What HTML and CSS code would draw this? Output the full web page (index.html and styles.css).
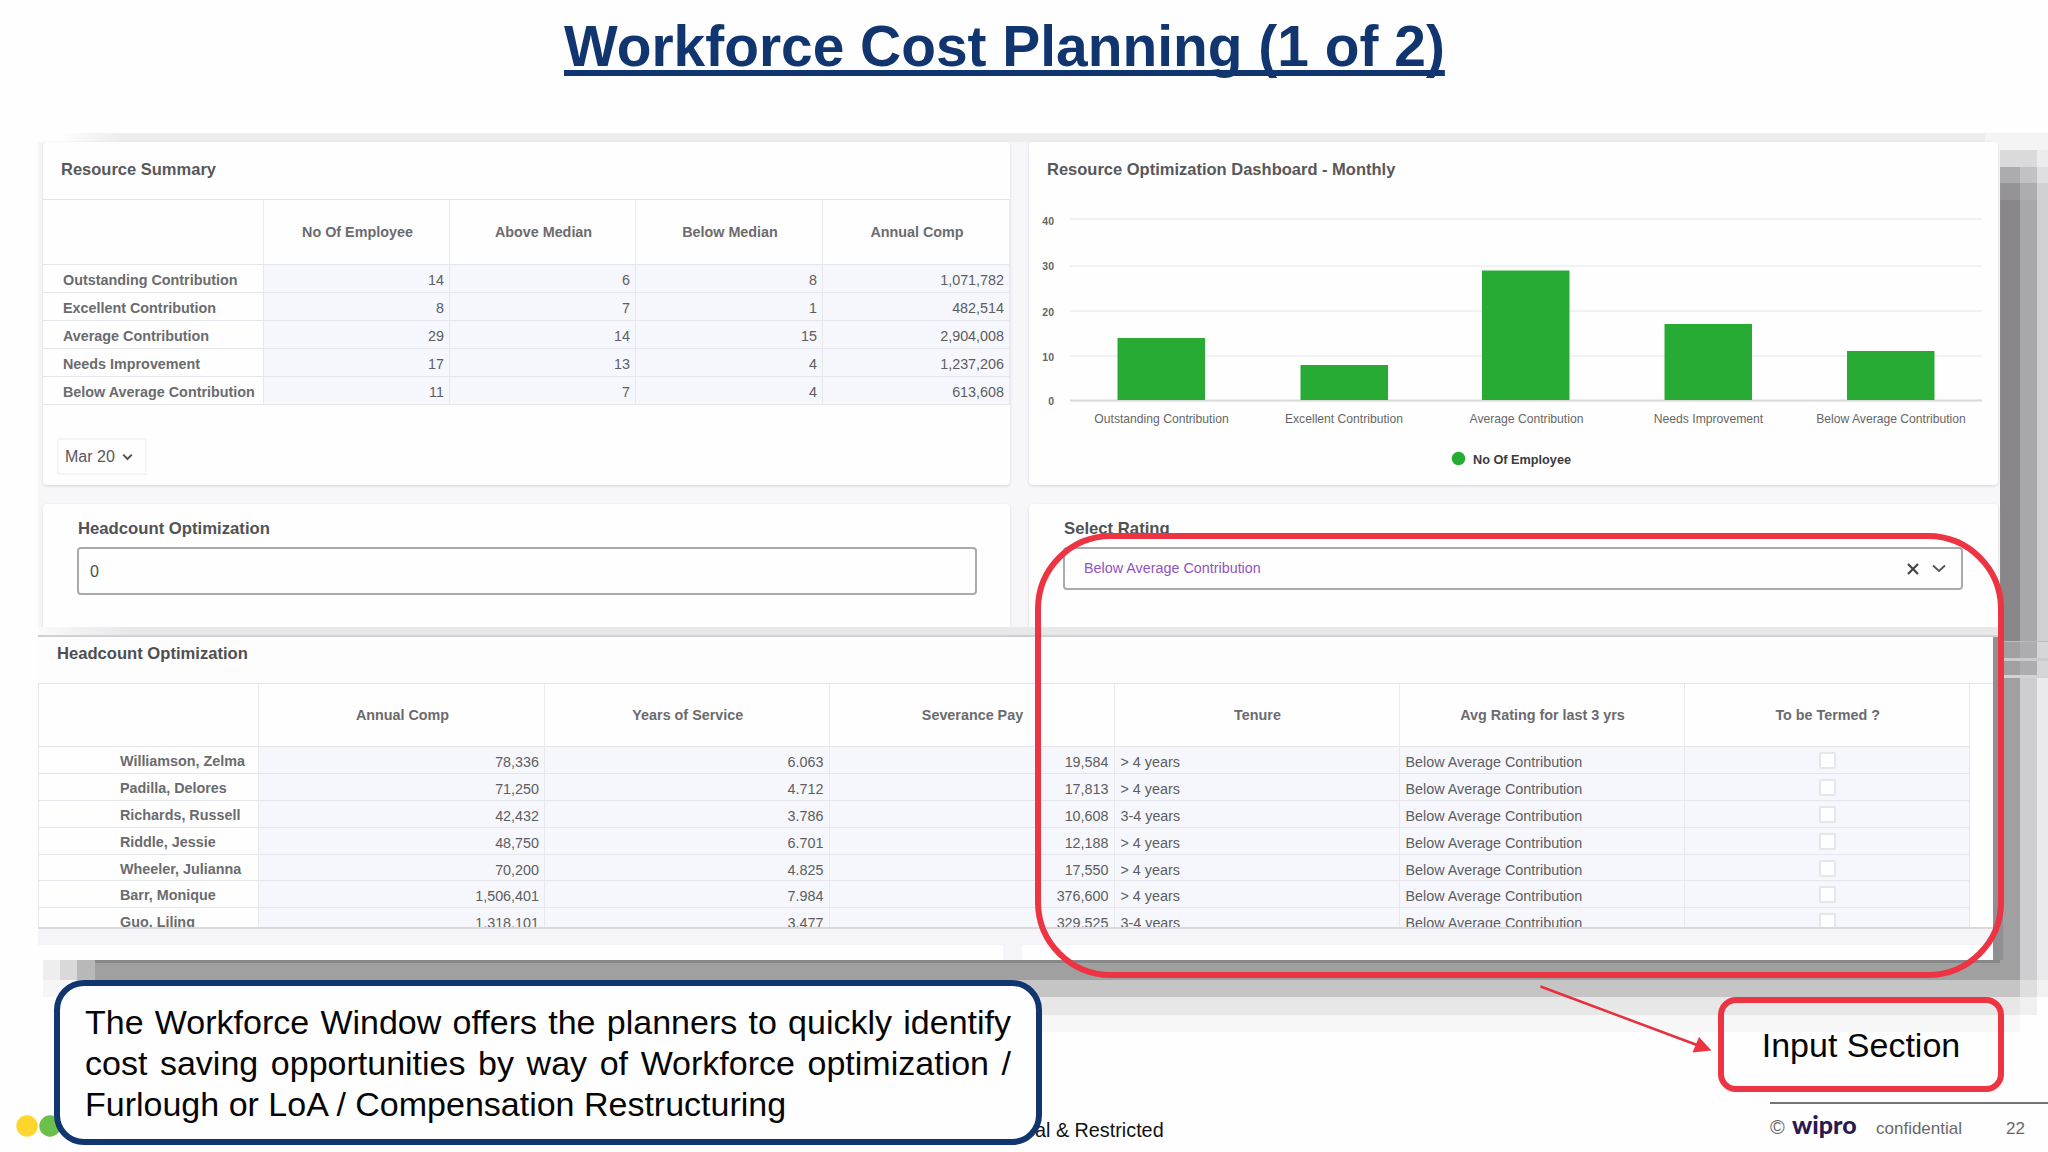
FILE: index.html
```html
<!DOCTYPE html>
<html lang="en">
<head>
<meta charset="utf-8">
<title>Workforce Cost Planning</title>
<link rel="stylesheet" href="styles.css">
</head>
<body>
<main class="slide">
  <svg class="shadow" viewBox="0 0 2048 1152" aria-hidden="true" shape-rendering="crispEdges">
    <defs><linearGradient id="fade"><stop offset="0" stop-color="#fefefe"/><stop offset="1" stop-color="#ededed"/></linearGradient></defs>
    <rect x="60" y="133" width="60" height="10" fill="url(#fade)"/>
    <rect x="120" y="133" width="1900" height="10" fill="#ededed"/>
    <rect x="1985" y="133" width="63" height="17" fill="#f4f4f5"/>
    <rect x="1999" y="150" width="38" height="17" fill="#dadadb"/>
    <rect x="2037" y="150" width="11" height="17" fill="#ececed"/>
    <rect x="1999" y="167" width="21" height="16" fill="#acabad"/>
    <rect x="2020" y="167" width="17" height="16" fill="#c2c1c3"/>
    <rect x="2037" y="167" width="11" height="16" fill="#dfdee0"/>
    <rect x="1999" y="183" width="21" height="17" fill="#949395"/>
    <rect x="2020" y="183" width="17" height="17" fill="#adacae"/>
    <rect x="1999" y="200" width="21" height="441" fill="#888688"/>
    <rect x="2020" y="200" width="17" height="441" fill="#a8a7a9"/>
    <rect x="2037" y="183" width="11" height="458" fill="#d1d0d2"/>
    <rect x="1993" y="636" width="10" height="327" fill="#909092"/>
    <rect x="2003" y="641" width="17" height="339" fill="#a0a0a2"/>
    <rect x="2020" y="641" width="17" height="35" fill="#adadaf"/>
    <rect x="2020" y="676" width="17" height="304" fill="#cecdd0"/>
    <rect x="2037" y="641" width="11" height="35" fill="#d6d5d8"/>
    <rect x="2037" y="676" width="11" height="304" fill="#eae9ec"/>
    <rect x="2003" y="641" width="45" height="1" fill="#bbbabd"/>
    <rect x="2003" y="658" width="45" height="3" fill="#cbcacd"/>
    <rect x="2003" y="675" width="45" height="3" fill="#d3d2d5"/>
    <rect x="43" y="960" width="17" height="20" fill="#eeeeef"/>
    <rect x="60" y="960" width="17" height="20" fill="#d9d9da"/>
    <rect x="77" y="960" width="18" height="20" fill="#b8b8b9"/>
    <rect x="95" y="960" width="1925" height="20" fill="#a0a0a1"/>
    <rect x="95" y="960" width="1905" height="3" fill="#88888a"/>
    <rect x="43" y="980" width="57" height="17" fill="#f6f6f7"/>
    <rect x="95" y="980" width="1925" height="17" fill="#c5c5c5"/>
    <rect x="2020" y="980" width="17" height="17" fill="#dfdedf"/>
    <rect x="2037" y="980" width="11" height="17" fill="#f2f2f3"/>
    <rect x="95" y="997" width="1925" height="18" fill="#e7e7e8"/>
    <rect x="2020" y="997" width="17" height="18" fill="#f0f0f1"/>
    <rect x="95" y="1015" width="1925" height="17" fill="#f7f7f7"/>
  </svg>

  <h1 class="title"><span>Workforce Cost Planning (1 of 2)</span></h1>

  <div class="board">
    <section class="panel summary">
      <h2 class="panel-title">Resource Summary</h2>
      <div class="grid grid-summary">
        <div class="head"></div><div class="head">No Of Employee</div><div class="head">Above Median</div><div class="head">Below Median</div><div class="head">Annual Comp</div>
        <div class="name">Outstanding Contribution</div><div class="num">14</div><div class="num">6</div><div class="num">8</div><div class="num">1,071,782</div>
        <div class="name">Excellent Contribution</div><div class="num">8</div><div class="num">7</div><div class="num">1</div><div class="num">482,514</div>
        <div class="name">Average Contribution</div><div class="num">29</div><div class="num">14</div><div class="num">15</div><div class="num">2,904,008</div>
        <div class="name">Needs Improvement</div><div class="num">17</div><div class="num">13</div><div class="num">4</div><div class="num">1,237,206</div>
        <div class="name">Below Average Contribution</div><div class="num">11</div><div class="num">7</div><div class="num">4</div><div class="num">613,608</div>
      </div>
      <div class="month">Mar 20
        <svg width="11" height="8" viewBox="0 0 11 8"><path d="M1.2 1.6 5.5 6l4.300-4.400" fill="none" stroke="#555" stroke-width="2"/></svg>
      </div>
    </section>

    <section class="panel chart">
      <h2 class="panel-title">Resource Optimization Dashboard - Monthly</h2>
      <svg class="plot" width="969" height="285" viewBox="1029 200 969 285">
        <g stroke="#f2f2f4" stroke-width="2">
          <path d="M1070 219H1982M1070 266H1982M1070 311H1982M1070 356H1982"/>
          <path d="M1070 400.500H1982" stroke="#d9d9dc"/>
        </g>
        <g fill="#27ab35">
          <rect x="1117.500" y="338" width="87.500" height="62"/>
          <rect x="1300.500" y="365" width="87.500" height="35"/>
          <rect x="1482" y="270.500" width="87.500" height="129.500"/>
          <rect x="1664.500" y="324" width="87.500" height="76"/>
          <rect x="1847" y="351" width="87.500" height="49"/>
          <circle cx="1458.500" cy="458.500" r="6.800"/>
        </g>
        <g class="axis">
          <text x="1054" y="225">40</text><text x="1054" y="270">30</text><text x="1054" y="316">20</text><text x="1054" y="361">10</text><text x="1054" y="405">0</text>
        </g>
        <g class="cats">
          <text x="1161.500" y="422.500">Outstanding Contribution</text><text x="1344" y="422.500">Excellent Contribution</text><text x="1526.500" y="422.500">Average Contribution</text><text x="1708.500" y="422.500">Needs Improvement</text><text x="1891" y="422.500">Below Average Contribution</text>
        </g>
        <text class="legend" x="1473" y="464">No Of Employee</text>
      </svg>
    </section>

    <section class="panel field-panel">
      <h2 class="field-label">Headcount Optimization</h2>
      <div class="field">0</div>
    </section>
    <section class="panel field-panel">
      <h2 class="field-label">Select Rating</h2>
      <div class="field select">Below Average Contribution
        <span class="select-icons">
          <svg width="12" height="12" viewBox="0 0 12 12"><path d="M1 1 11 11M11 1 1 11" stroke="#444" stroke-width="2.200"/></svg>
          <svg width="14" height="9" viewBox="0 0 14 9"><path d="M1 1.500 7 7l6-5.500" fill="none" stroke="#555" stroke-width="1.800"/></svg>
        </span>
      </div>
    </section>
  </div>

  <section class="detail">
    <h2 class="detail-title">Headcount Optimization</h2>
    <div class="grid grid-detail">
      <div class="head"></div><div class="head">Annual Comp</div><div class="head">Years of Service</div><div class="head">Severance Pay</div><div class="head">Tenure</div><div class="head">Avg Rating for last 3 yrs</div><div class="head">To be Termed ?</div>
      <div class="name">Williamson, Zelma</div><div class="num">78,336</div><div class="num">6.063</div><div class="num">19,584</div><div class="txt">&gt; 4 years</div><div class="txt">Below Average Contribution</div><div class="chk"><i></i></div>
      <div class="name">Padilla, Delores</div><div class="num">71,250</div><div class="num">4.712</div><div class="num">17,813</div><div class="txt">&gt; 4 years</div><div class="txt">Below Average Contribution</div><div class="chk"><i></i></div>
      <div class="name">Richards, Russell</div><div class="num">42,432</div><div class="num">3.786</div><div class="num">10,608</div><div class="txt">3-4 years</div><div class="txt">Below Average Contribution</div><div class="chk"><i></i></div>
      <div class="name">Riddle, Jessie</div><div class="num">48,750</div><div class="num">6.701</div><div class="num">12,188</div><div class="txt">&gt; 4 years</div><div class="txt">Below Average Contribution</div><div class="chk"><i></i></div>
      <div class="name">Wheeler, Julianna</div><div class="num">70,200</div><div class="num">4.825</div><div class="num">17,550</div><div class="txt">&gt; 4 years</div><div class="txt">Below Average Contribution</div><div class="chk"><i></i></div>
      <div class="name">Barr, Monique</div><div class="num">1,506,401</div><div class="num">7.984</div><div class="num">376,600</div><div class="txt">&gt; 4 years</div><div class="txt">Below Average Contribution</div><div class="chk"><i></i></div>
      <div class="name">Guo, Liling</div><div class="num">1,318,101</div><div class="num">3.477</div><div class="num">329,525</div><div class="txt">3-4 years</div><div class="txt">Below Average Contribution</div><div class="chk"><i></i></div>
    </div>
    <div class="next"><span></span><span></span></div>
  </section>

  <footer class="footer">
    <svg class="dots" width="60" height="24" viewBox="0 0 60 24"><circle cx="11" cy="12" r="10.700" fill="#fdd52c"/><circle cx="34" cy="12" r="10.700" fill="#6bbf4b"/></svg>
    <span class="restricted">al &amp; Restricted</span>
    <div class="brand"><span class="copy">©</span><span class="wipro">wipro</span><span class="conf">confidential</span><span class="page">22</span></div>
  </footer>

  <div class="frame"></div>
  <svg class="arrow" width="180" height="76" viewBox="1536 980 180 76"><path d="M1540.500 986.500 1697 1045" stroke="#e6303e" stroke-width="2.500"/><path d="M1699 1037 1711.500 1050.500 1692.500 1052.500Z" fill="#ec3442"/></svg>
  <div class="input-tag">Input Section</div>
  <p class="callout">The Workforce Window offers the planners to quickly identify cost saving opportunities by way of Workforce optimization / Furlough or LoA / Compensation Restructuring</p>
</main>
</body>
</html>
```

FILE: styles.css
```css
* { box-sizing: border-box; }
body { margin: 0; background: #fefefe; font-family: "Liberation Sans", Arial, sans-serif; }
h1, h2, p { margin: 0; }

.slide { position: relative; width: 2048px; height: 1152px; overflow: hidden; display: flex; flex-direction: column; background: #fefefe; }
.shadow { position: absolute; inset: 0; width: 2048px; height: 1152px; }

.title { height: 142px; padding: 14px 0 0 564px; font-size: 56.9px; line-height: 65px; font-weight: 700; color: #10356f; white-space: nowrap; }
.title span { text-decoration: underline; text-decoration-thickness: 6px; text-underline-offset: 4px; text-decoration-skip-ink: none; }

.board { position: relative; flex: none; width: 1962px; height: 495px; margin-left: 38px; padding: 0 1px 0 5px; display: grid; grid-template-columns: 967px 969px; grid-template-rows: 343px 131px; gap: 19px; background: #f7f6f9; border-bottom: 2px solid #cdcdcf; }
.board::after { content: ""; position: absolute; left: 0; right: 0; bottom: 0; height: 8px; background: linear-gradient(90deg, #fafafa, #e8e7e9 90px); }
.panel { background: #fefefe; border-radius: 4px; box-shadow: 0 1px 3px #d6d5da; overflow: hidden; }
.panel-title { height: 57px; padding: 0 18px; line-height: 54px; font-size: 16.5px; font-weight: 700; color: #58585b; }

.grid { display: grid; color: #5d5d60; font-size: 14.35px; }
.grid > div { border-right: 1px solid #e7e8ec; border-bottom: 1px solid #e4e6eb; white-space: nowrap; overflow: hidden; }
.grid .head { display: flex; align-items: center; justify-content: center; padding-left: 2px; font-weight: 700; color: #6b6b6e; border-right-color: #ebebee; }
.grid .name { font-weight: 700; color: #6b6b6e; }
.grid .num { text-align: right; padding-right: 5px; background: #f5f7fc; }
.grid .txt { padding-left: 6px; background: #f5f7fc; }
.grid-summary { grid-template-columns: 221px 186px 186px 187px 187px; grid-template-rows: 65px repeat(5, 28px); border-top: 1px solid #e3e4e8; line-height: 31px; }
.grid-summary .name { padding-left: 20px; }

.month { display: flex; align-items: center; gap: 7px; width: 90px; height: 37px; margin: 33px 0 0 14px; padding-left: 6px; font-size: 16px; color: #58585b; border: 2px solid #f5f5f7; }
.plot { display: block; }
.axis text { text-anchor: end; font-size: 10.500px; font-weight: 700; fill: #666; }
.cats text { text-anchor: middle; font-size: 12.150px; fill: #666; }
.legend { font-size: 12.700px; font-weight: 700; fill: #3c3c3e; }
.chart .panel-title { height: 58px; }

.field-panel { padding: 12px 34px 0; }
.field-label { height: 31px; padding-left: 1px; line-height: 26px; font-size: 16.7px; font-weight: 700; color: #525255; }
.field { width: 900px; height: 48px; padding: 0 11px; border: 2px solid #aaaaae; border-radius: 4px; font-size: 16px; line-height: 45px; color: #4c4c4f; }
.select { display: flex; align-items: center; justify-content: space-between; height: 43px; padding: 0 15px 0 19px; font-size: 14.35px; color: #9152c4; }
.select-icons { display: flex; align-items: center; gap: 13px; }

.detail { position: relative; flex: none; display: flex; flex-direction: column; width: 1955px; height: 323px; margin-left: 38px; background: #f5f4f9; }
.detail-title { height: 46px; padding-left: 19px; line-height: 34px; font-size: 16.6px; font-weight: 700; color: #4f4f52; background: #fdfdfe; }
.grid-detail { height: 246px; overflow: hidden; padding-right: 23px; grid-template-columns: 220px 286px 284.5px 285px 285px 285px 285.5px; grid-template-rows: 63px repeat(7, 26.9px); border-top: 1px solid #e3e4e8; border-left: 1px solid #e8e8ec; border-bottom: 2px solid #d9d9dd; background: #fefefe; line-height: 31px; }
.grid-detail .name { padding-left: 81px; line-height: 29px; }
.chk { display: flex; justify-content: center; padding-top: 5px; background: #f5f7fc; }
.chk i { width: 17px; height: 17px; margin-left: 2px; border: 2px solid #e6e7e9; border-radius: 2px; background: #fefefe; }
.next { flex: 1; display: grid; grid-template-columns: 965px 971px; gap: 19px; padding-top: 16px; }
.next span { background: #fefefe; }

.footer { position: relative; flex: 1; display: flex; align-items: flex-start; padding: 142px 0 0 16px; white-space: nowrap; }
.dots { margin-top: 12px; flex: none; }
.restricted { margin-left: 959px; margin-top: 17px; font-size: 19.800px; line-height: 23px; color: #111; }
.brand { display: flex; align-items: baseline; width: 278px; height: 50px; margin-left: auto; padding-top: 5px; border-top: 2px solid #737276; font-size: 17px; line-height: 30px; color: #68676b; }
.copy { width: 22px; font-size: 20px; }
.wipro { width: 84px; font-family: Lato, sans-serif; font-size: 25px; font-weight: 900; color: #2a194f; }
.conf { width: 130px; }

.frame { position: absolute; left: 1035px; top: 533px; width: 969px; height: 445px; border: 6px solid #ec3442; border-radius: 76px; }
.arrow { position: absolute; left: 1536px; top: 980px; }
.input-tag { position: absolute; left: 1718px; top: 997px; width: 286px; height: 95px; border: 6px solid #ec3442; border-radius: 18px; text-align: center; font-size: 34px; line-height: 85px; color: #050505; }
.callout { position: absolute; left: 54px; top: 980px; width: 988px; height: 165px; padding: 16px 25px 0; border: 6px solid #10356f; border-radius: 30px; background: #fefefe; text-align: justify; font-size: 34px; line-height: 41px; color: #050505; }
```
